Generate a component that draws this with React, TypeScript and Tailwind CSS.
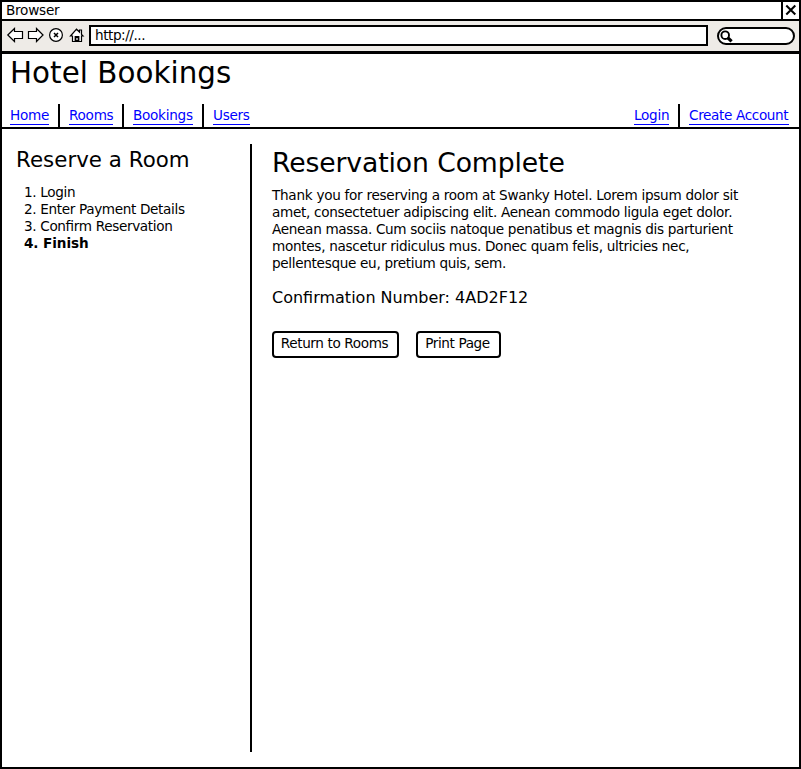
import type { ReactNode } from "react";

function NavLink({ children, width }: { children: ReactNode; width: string }) {
  return (
    <a href="#" className={`mt-[3px] block h-[18px] whitespace-nowrap border-b border-[#0000ff] leading-[17px] text-[#0000ff] ${width}`}>
      {children}
    </a>
  );
}

function Divider() {
  return (
    <div className="w-5 pl-[9px]">
      <span className="block h-[23px] w-[2px] bg-black" />
    </div>
  );
}

function TitleBar() {
  return (
    <div className="flex h-[19px] border-b-2 border-black bg-white">
      <div className="flex-1 pl-1 leading-[17px] tracking-[-0.25px]">Browser</div>
      <button className="flex w-[18px] items-center justify-center border-l-2 border-black">
        <svg className="block shrink-0" width="16" height="17" viewBox="0 0 16 17" fill="none" stroke="black" strokeWidth="2">
          <path d="M3.3 3.5 12.3 12.5M12.3 3.5 3.3 12.5" />
        </svg>
      </button>
    </div>
  );
}

function Toolbar() {
  return (
    <div className="flex h-[33px] items-start border-b-3 border-black bg-[#eeebe7]">
      <svg className="block shrink-0" width="87" height="30" viewBox="2 21 87 30" fill="white" stroke="black" strokeWidth="1.2">
        <path d="M7.8 35 14.5 28.5V31.5H22.5V38.5H14.5V41.5Z" />
        <path d="M43 35 36.5 28.5V31.5H28.5V38.5H36.5V41.5Z" />
        <circle cx="56" cy="35" r="6.4" />
        <path d="M54 33l4 4M58 33l-4 4" strokeWidth="1.5" />
        <path d="M72.5 41.5V36H70.5L76.5 29.2 79.5 32V30H81.5V34.5L83 36H81.5V41.5Z" />
        <path d="M75.5 41V37H78.5V41Z" strokeWidth="1.8" />
      </svg>
      <div className="mt-[4px] h-[21px] w-[619px] border-2 border-black bg-white pl-1 leading-[17px] tracking-[-0.45px]">http://...</div>
      <div className="mt-[6px] ml-[9px] h-[18px] w-[78px] rounded-full border-2 border-black bg-white">
        <svg className="block" width="16" height="14" viewBox="0 0 16 14" fill="none" stroke="black">
          <circle cx="6.2" cy="6.2" r="3.8" strokeWidth="1.9" />
          <path d="M8.5 8.5 12.6 12.4" strokeWidth="3.2" />
        </svg>
      </div>
    </div>
  );
}

export default function App() {
  return (
    <div className="flex h-[769px] w-[801px] flex-col overflow-hidden border-2 border-black bg-white font-['DejaVu_Sans',sans-serif] text-[13.6px] text-black [font-feature-settings:'liga'_1]">
      <TitleBar />
      <Toolbar />
      <header className="h-[50px] pl-2">
        <h1 className="text-[29.333px] leading-[38px] tracking-[0.05px] whitespace-nowrap">Hotel Bookings</h1>
      </header>
      <nav className="flex h-[25px] items-start justify-between border-b-2 border-black pr-[10px] pl-2 tracking-[-0.28px]">
        <div className="flex">
          <NavLink width="w-[39px]">Home</NavLink>
          <Divider />
          <NavLink width="w-[44px]">Rooms</NavLink>
          <Divider />
          <NavLink width="w-[60px]">Bookings</NavLink>
          <Divider />
          <NavLink width="w-[37px]">Users</NavLink>
        </div>
        <div className="flex">
          <NavLink width="w-[35px]">Login</NavLink>
          <Divider />
          <NavLink width="w-[100px] tracking-[-0.36px]">Create Account</NavLink>
        </div>
      </nav>
      <div className="flex pt-[15px]">
        <aside className="h-[608px] w-[250px] border-r-2 border-black pl-[14px]">
          <h2 className="pt-[2px] text-[21.333px] leading-7 tracking-[0.04px] whitespace-nowrap">Reserve a Room</h2>
          <ol className="pt-[10px] pl-2 leading-[17px] tracking-[-0.35px] whitespace-nowrap">
            <li>1. Login</li>
            <li>2. Enter Payment Details</li>
            <li>3. Confirm Reservation</li>
            <li className="font-bold tracking-[-0.1px]">4. Finish</li>
          </ol>
        </aside>
        <main className="flex-1 pl-5">
          <h2 className="pt-[2px] text-[26.667px] leading-[34px] tracking-[-0.12px] whitespace-nowrap">Reservation Complete</h2>
          <p className="pt-[7px] leading-[17px] whitespace-nowrap">
            <span className="tracking-[-0.28px]">Thank you for reserving a room at Swanky Hotel. Lorem ipsum dolor sit</span><br />
            <span className="tracking-[-0.31px]">amet, consectetuer adipiscing elit. Aenean commodo ligula eget dolor.</span><br />
            <span className="tracking-[-0.32px]">Aenean massa. Cum sociis natoque penatibus et magnis dis parturient</span><br />
            <span className="tracking-[-0.3px]">montes, nascetur ridiculus mus. Donec quam felis, ultricies nec,</span><br />
            <span className="tracking-[-0.32px]">pellentesque eu, pretium quis, sem.</span>
          </p>
          <p className="pt-[16px] text-[16px] leading-[20px]">Confirmation Number: 4AD2F12</p>
          <div className="flex gap-[17px] pt-[23px]">
            <button className="h-[27px] w-[127px] rounded border-2 border-black pr-[2px] pb-[2px] leading-[21px] tracking-[-0.38px] whitespace-nowrap">Return to Rooms</button>
            <button className="h-[27px] w-[85px] rounded border-2 border-black pr-[2px] pb-[2px] leading-[21px] tracking-[-0.38px] whitespace-nowrap">Print Page</button>
          </div>
        </main>
      </div>
    </div>
  );
}
